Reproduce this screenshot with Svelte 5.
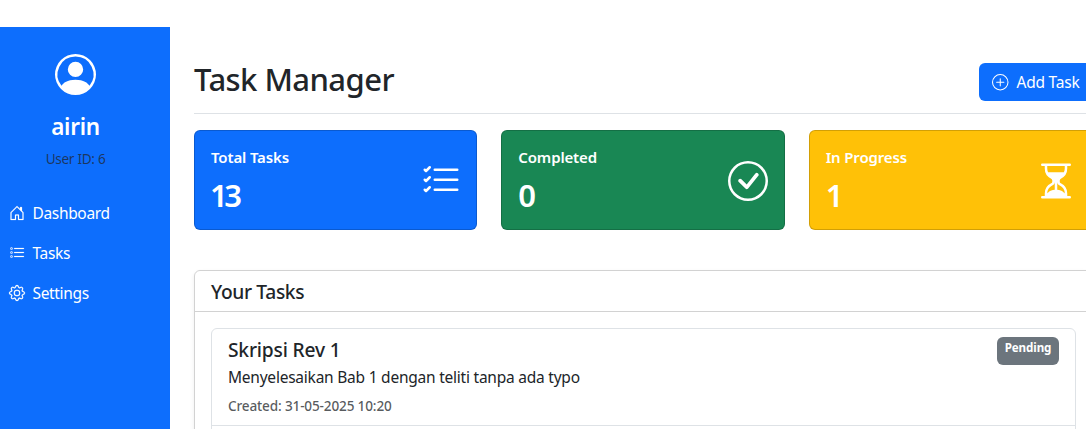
<script>
  const icons = {
    person: 'M11 6a3 3 0 1 1-6 0 3 3 0 0 1 6 0M0 8a8 8 0 1 1 16 0A8 8 0 0 1 0 8m8-7a7 7 0 0 0-5.468 11.37C3.242 11.226 4.805 10 8 10s4.757 1.225 5.468 2.37A7 7 0 0 0 8 1',
    house: 'M8.354 1.146a.5.5 0 0 0-.708 0l-6 6A.5.5 0 0 0 1.5 7.5v7a.5.5 0 0 0 .5.5h4.5a.5.5 0 0 0 .5-.5v-4h2v4a.5.5 0 0 0 .5.5H14a.5.5 0 0 0 .5-.5v-7a.5.5 0 0 0-.146-.354L13 5.793V2.5a.5.5 0 0 0-.5-.5h-1a.5.5 0 0 0-.5.5v1.293zM2.5 14V7.707l5.5-5.5 5.5 5.5V14H10v-4a.5.5 0 0 0-.5-.5h-3a.5.5 0 0 0-.5.5v4z',
    list: 'M2 2.5a.5.5 0 0 0-.5.5v1a.5.5 0 0 0 .5.5h1a.5.5 0 0 0 .5-.5V3a.5.5 0 0 0-.5-.5zM3 3H2v1h1zM5 3.5a.5.5 0 0 1 .5-.5h9a.5.5 0 0 1 0 1h-9a.5.5 0 0 1-.5-.5M5.5 7a.5.5 0 0 0 0 1h9a.5.5 0 0 0 0-1zm0 4a.5.5 0 0 0 0 1h9a.5.5 0 0 0 0-1zM1.5 7a.5.5 0 0 1 .5-.5h1a.5.5 0 0 1 .5.5v1a.5.5 0 0 1-.5.5H2a.5.5 0 0 1-.5-.5zM2 7h1v1H2zm0 3.5a.5.5 0 0 0-.5.5v1a.5.5 0 0 0 .5.5h1a.5.5 0 0 0 .5-.5v-1a.5.5 0 0 0-.5-.5zm1 .5H2v1h1z',
    gear: 'M8 4.754a3.246 3.246 0 1 0 0 6.492 3.246 3.246 0 0 0 0-6.492M5.754 8a2.246 2.246 0 1 1 4.492 0 2.246 2.246 0 0 1-4.492 0M9.796 1.343c-.527-1.79-3.065-1.79-3.592 0l-.094.319a.873.873 0 0 1-1.255.52l-.292-.16c-1.64-.892-3.433.902-2.54 2.541l.159.292a.873.873 0 0 1-.52 1.255l-.319.094c-1.79.527-1.79 3.065 0 3.592l.319.094a.873.873 0 0 1 .52 1.255l-.16.292c-.892 1.64.901 3.434 2.541 2.54l.292-.159a.873.873 0 0 1 1.255.52l.094.319c.527 1.79 3.065 1.79 3.592 0l.094-.319a.873.873 0 0 1 1.255-.52l.292.16c1.64.893 3.434-.902 2.54-2.541l-.159-.292a.873.873 0 0 1 .52-1.255l.319-.094c1.79-.527 1.79-3.065 0-3.592l-.319-.094a.873.873 0 0 1-.52-1.255l.16-.292c.893-1.64-.902-3.433-2.541-2.54l-.292.159a.873.873 0 0 1-1.255-.52zm-2.633.283c.246-.835 1.428-.835 1.674 0l.094.319a1.873 1.873 0 0 0 2.693 1.115l.291-.16c.764-.415 1.6.42 1.184 1.185l-.159.292a1.873 1.873 0 0 0 1.116 2.692l.318.094c.835.246.835 1.428 0 1.674l-.319.094a1.873 1.873 0 0 0-1.115 2.693l.16.291c.415.764-.42 1.6-1.185 1.184l-.291-.159a1.873 1.873 0 0 0-2.693 1.116l-.094.318c-.246.835-1.428.835-1.674 0l-.094-.319a1.873 1.873 0 0 0-2.692-1.115l-.292.16c-.764.415-1.6-.42-1.184-1.185l.159-.291A1.873 1.873 0 0 0 1.945 8.93l-.319-.094c-.835-.246-.835-1.428 0-1.674l.319-.094A1.873 1.873 0 0 0 3.06 4.377l-.16-.292c-.415-.764.42-1.6 1.185-1.184l.292.159a1.873 1.873 0 0 0 2.692-1.115z',
    plus: 'M8 15A7 7 0 1 1 8 1a7 7 0 0 1 0 14m0 1A8 8 0 1 0 8 0a8 8 0 0 0 0 16M8 4a.5.5 0 0 1 .5.5v3h3a.5.5 0 0 1 0 1h-3v3a.5.5 0 0 1-1 0v-3h-3a.5.5 0 0 1 0-1h3v-3A.5.5 0 0 1 8 4',
    checklist: 'M5 11.5a.5.5 0 0 1 .5-.5h9a.5.5 0 0 1 0 1h-9a.5.5 0 0 1-.5-.5m0-4a.5.5 0 0 1 .5-.5h9a.5.5 0 0 1 0 1h-9a.5.5 0 0 1-.5-.5m0-4a.5.5 0 0 1 .5-.5h9a.5.5 0 0 1 0 1h-9a.5.5 0 0 1-.5-.5M3.854 2.146a.5.5 0 0 1 0 .708l-1.5 1.5a.5.5 0 0 1-.708 0l-.5-.5a.5.5 0 1 1 .708-.708L2 3.293l1.146-1.147a.5.5 0 0 1 .708 0m0 4a.5.5 0 0 1 0 .708l-1.5 1.5a.5.5 0 0 1-.708 0l-.5-.5a.5.5 0 1 1 .708-.708L2 7.293l1.146-1.147a.5.5 0 0 1 .708 0m0 4a.5.5 0 0 1 0 .708l-1.5 1.5a.5.5 0 0 1-.708 0l-.5-.5a.5.5 0 0 1 .708-.708l.146.147 1.146-1.147a.5.5 0 0 1 .708 0',
    check: 'M8 15A7 7 0 1 1 8 1a7 7 0 0 1 0 14m0 1A8 8 0 1 0 8 0a8 8 0 0 0 0 16M10.97 4.97l-.02.022-3.473 4.425-2.093-2.094a.75.75 0 0 0-1.06 1.06L6.97 11.03a.75.75 0 0 0 1.079-.02l3.992-4.99a.75.75 0 0 0-1.071-1.05',
    hourglass: 'M2.5 15a.5.5 0 1 1 0-1h1v-1a4.5 4.5 0 0 1 2.557-4.06c.29-.139.443-.377.443-.59v-.7c0-.213-.154-.451-.443-.59A4.5 4.5 0 0 1 3.5 3V2h-1a.5.5 0 0 1 0-1h11a.5.5 0 0 1 0 1h-1v1a4.5 4.5 0 0 1-2.557 4.06c-.29.139-.443.377-.443.59v.7c0 .213.154.451.443.59A4.5 4.5 0 0 1 12.5 13v1h1a.5.5 0 0 1 0 1zm2-13v1c0 .537.12 1.045.337 1.5h6.326c.216-.455.337-.963.337-1.5V2zm3 6.35c0 .701-.478 1.236-1.011 1.492A3.5 3.5 0 0 0 4.5 13s.866-1.299 3-1.48zm1 0v3.17c2.134.181 3 1.48 3 1.48a3.5 3.5 0 0 0-1.989-3.158C8.978 9.586 8.5 9.052 8.5 8.351z'
  };

  const nav = [
    { label: 'Dashboard', icon: 'house' },
    { label: 'Tasks', icon: 'list' },
    { label: 'Settings', icon: 'gear' }
  ];

  const stats = [
    { label: 'Total Tasks', value: 13, icon: 'checklist', tone: 'blue' },
    { label: 'Completed', value: 0, icon: 'check', tone: 'green' },
    { label: 'In Progress', value: 1, icon: 'hourglass', tone: 'yellow' }
  ];

  const task = {
    title: 'Skripsi Rev 1',
    text: 'Menyelesaikan Bab 1 dengan teliti tanpa ada typo',
    created: 'Created: 31-05-2025 10:20',
    status: 'Pending'
  };
</script>

{#snippet icon(name, size)}
  <svg width={size} height={size} viewBox="0 0 16 16" fill="currentColor" overflow="visible" aria-hidden="true">
    <path fill-rule={name === 'list' ? 'evenodd' : 'nonzero'} d={icons[name]} />
  </svg>
{/snippet}

<div class="page">
  <aside>
    <div class="profile">
      {@render icon('person', 41)}
      <h4>airin</h4>
      <small>User ID: 6</small>
    </div>
    <nav>
      {#each nav as item}
        <a href="#top">{@render icon(item.icon, 16)}<span>{item.label}</span></a>
      {/each}
    </nav>
  </aside>

  <main>
    <header>
      <h1>Task Manager</h1>
      <button>{@render icon('plus', 16.5)}<span>Add Task</span></button>
    </header>

    <section class="stats">
      {#each stats as stat}
        <article class={stat.tone}>
          <div>
            <h6>{stat.label}</h6>
            <strong>{stat.value}</strong>
          </div>
          {@render icon(stat.icon, 40)}
        </article>
      {/each}
    </section>

    <section class="tasks">
      <h5>Your Tasks</h5>
      <ul>
        <li>
          <div>
            <h5 class="name">{task.title}</h5>
            <p>{task.text}</p>
            <small>{task.created}</small>
          </div>
          <span class="badge">{task.status}</span>
        </li>
        <li></li>
      </ul>
    </section>
  </main>
</div>

<style>
  :global(body) {
    overflow: hidden;
    background: #fff;
  }
  * {
    box-sizing: border-box;
  }
  .page {
    display: flex;
    height: 429px;
    padding-top: 27px;
    overflow: hidden;
    font-family: 'Noto Sans', 'Open Sans', sans-serif;
    font-size: 15.5px;
    line-height: 24px;
    letter-spacing: -0.23px;
    color: #212529;
    white-space: nowrap;
  }
  h1, h4, h5, h6, p, ul {
    margin: 0;
    padding: 0;
    font-weight: 500;
  }
  svg {
    display: block;
    flex: none;
  }
  aside {
    flex: 0 0 170px;
    background: #0d6efd;
    color: #fff;
  }
  .profile {
    display: flex;
    flex-direction: column;
    align-items: center;
    padding: 26.5px 19px 0 0;
  }
  .profile h4 {
    margin-top: 17.5px;
    font-size: 22.5px;
    font-weight: 600;
    line-height: 29px;
    letter-spacing: -0.3px;
  }
  .profile small {
    margin-top: 7px;
    font-size: 13.6px;
    line-height: 21px;
    letter-spacing: -0.3px;
    color: rgba(33, 37, 41, 0.75);
  }
  nav {
    display: flex;
    flex-direction: column;
    padding-top: 24px;
  }
  nav a {
    display: flex;
    align-items: center;
    gap: 8px;
    height: 40px;
    padding-left: 8.5px;
    color: #fff;
    letter-spacing: -0.34px;
    text-decoration: none;
  }
  nav svg {
    stroke: currentColor;
    stroke-width: 0.2;
  }
  main {
    flex: 0 0 946px;
    padding: 24px 24px 0;
  }
  header {
    display: flex;
    justify-content: space-between;
    align-items: center;
    height: 63px;
    border-bottom: 1px solid #dee2e6;
  }
  h1 {
    padding-bottom: 6px;
    font-size: 31px;
    line-height: 38px;
    letter-spacing: -0.55px;
  }
  button {
    display: flex;
    align-items: center;
    gap: 8px;
    width: 113px;
    height: 38px;
    padding: 0 0 0 13px;
    border: 0;
    border-radius: 6px;
    background: #0d6efd;
    color: #fff;
    font: inherit;
    letter-spacing: inherit;
  }
  .stats {
    display: grid;
    grid-template-columns: repeat(3, 1fr);
    gap: 24px;
    margin-top: 16px;
  }
  article {
    display: flex;
    justify-content: space-between;
    align-items: center;
    height: 100px;
    padding: 2px 15.5px 0 16px;
    border: 1px solid rgba(0, 0, 0, 0.175);
    border-radius: 6px;
    color: #fff;
  }
  .blue { background-color: #0d6efd; }
  .green { background-color: #198754; }
  .yellow { background-color: #ffc107; }
  h6 {
    font-size: 15px;
    font-weight: 600;
    line-height: 18px;
    letter-spacing: -0.14px;
  }
  strong {
    display: block;
    margin: 10px 0 0 -1px;
    font-size: 31px;
    font-weight: 600;
    line-height: 38px;
    letter-spacing: -3.5px;
  }
  .green strong,
  .yellow strong {
    margin-left: 0;
  }
  .tasks {
    height: 300px;
    margin-top: 40px;
    border: 1px solid rgba(0, 0, 0, 0.175);
    border-radius: 6px;
    box-shadow: 0 2px 4px rgba(0, 0, 0, 0.075);
  }
  h5 {
    height: 41px;
    padding-left: 16px;
    border-bottom: 1px solid rgba(0, 0, 0, 0.175);
    font-size: 19.2px;
    line-height: 42px;
    letter-spacing: -0.35px;
  }
  ul {
    height: 240px;
    margin: 16px 15px 0 16px;
    border: 1px solid #dee2e6;
    border-radius: 6px;
    list-style: none;
  }
  li {
    display: flex;
    justify-content: space-between;
    align-items: flex-start;
    height: 97px;
    padding: 8px 16px;
    border-bottom: 1px solid #dee2e6;
  }
  li:last-child {
    border: 0;
  }
  h5.name {
    height: 24px;
    margin-bottom: 4px;
    padding: 0;
    border: 0;
    line-height: 26px;
    letter-spacing: -0.18px;
  }
  li p {
    font-weight: 400;
  }
  li small {
    display: block;
    margin-top: 6px;
    font-size: 13.6px;
    line-height: 21px;
    letter-spacing: -0.16px;
    color: rgba(33, 37, 41, 0.75);
  }
  .badge {
    width: 62px;
    height: 28px;
    padding: 5px 0;
    border-radius: 6px;
    background: #6c757d;
    color: #fff;
    font-size: 11.6px;
    font-weight: 700;
    line-height: 12px;
    letter-spacing: -0.1px;
    text-align: center;
  }
</style>
